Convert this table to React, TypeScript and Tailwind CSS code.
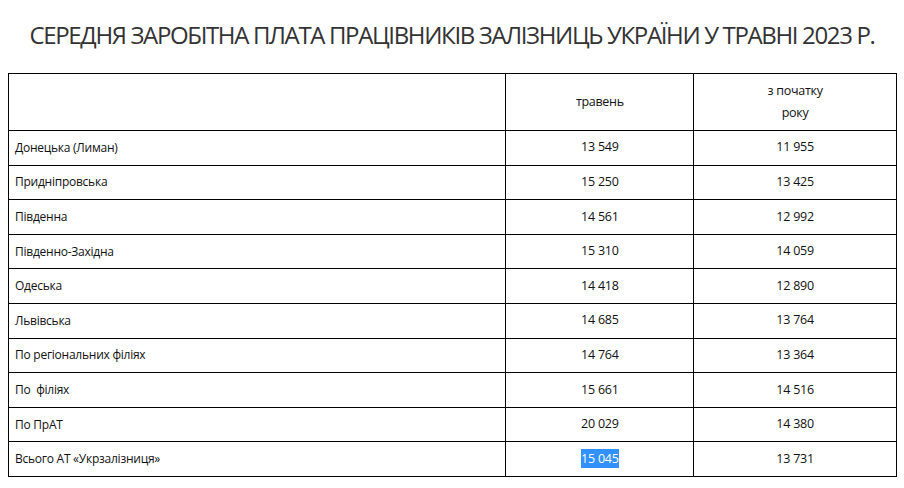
import React from "react";

const rows: [string, string, string][] = [
  ["Донецька (Лиман)", "13 549", "11 955"],
  ["Придніпровська", "15 250", "13 425"],
  ["Південна", "14 561", "12 992"],
  ["Південно-Західна", "15 310", "14 059"],
  ["Одеська", "14 418", "12 890"],
  ["Львівська", "14 685", "13 764"],
  ["По регіональних філіях", "14 764", "13 364"],
  ["По  філіях", "15 661", "14 516"],
  ["По ПрАТ", "20 029", "14 380"],
  ["Всього АТ «Укрзалізниця»", "15 045", "13 731"],
];

export default function App() {
  return (
    <div className="w-[904px] h-[488px] bg-white text-[#111] font-['Open_Sans',sans-serif]">
      <h1 className="pt-[20px] h-[73px] text-center text-[24px] leading-[30px] text-[#333] tracking-[-1.35px] font-normal">
        СЕРЕДНЯ ЗАРОБІТНА ПЛАТА ПРАЦІВНИКІВ ЗАЛІЗНИЦЬ УКРАЇНИ У ТРАВНІ 2023 Р.
      </h1>
      <table className="ml-[8px] w-[889px] border-collapse text-[12.5px] whitespace-pre">
        <colgroup>
          <col className="w-[498px]" />
          <col className="w-[188px]" />
          <col className="w-[203px]" />
        </colgroup>
        <tbody>
          <tr className="h-[57px]">
            <td className="border border-black"></td>
            <td className="border border-black text-center leading-[22px] tracking-[-0.3px]">травень</td>
            <td className="border border-black text-center leading-[22px] tracking-[-0.3px]">
              з початку
              <br />
              року
            </td>
          </tr>
          {rows.map((r, i) => (
            <tr key={i} className="h-[34.6px]">
              <td className="border border-black px-[6px] text-[12px] tracking-[-0.25px]">{r[0]}</td>
              <td className="border border-black text-center tracking-[-0.2px]">
                {i === rows.length - 1 ? (
                  <span className="bg-[#3390ff] text-white py-[1px]">{r[1]}</span>
                ) : (
                  r[1]
                )}
              </td>
              <td className="border border-black text-center tracking-[-0.2px]">{r[2]}</td>
            </tr>
          ))}
        </tbody>
      </table>
    </div>
  );
}
